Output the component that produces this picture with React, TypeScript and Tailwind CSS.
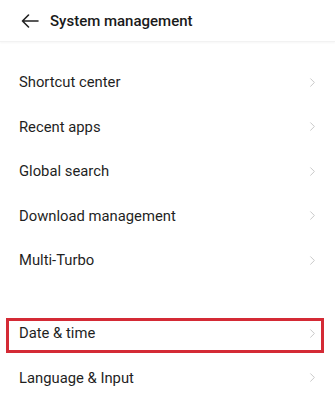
import { ChevronRight } from "lucide-react";

const groupA = [
  "Shortcut center",
  "Recent apps",
  "Global search",
  "Download management",
  "Multi-Turbo",
];

const groupB = ["Date & time", "Language & Input"];

function Row({ label, marked }: { label: string; marked?: boolean }) {
  return (
    <div className="relative flex h-[44.5px] items-center justify-between pl-[19px] pr-[15px]">
      <span className="text-[14.8px] text-[#1f1f1f]">{label}</span>
      <ChevronRight className="h-[15px] w-[15px] text-[#c4c4c4]" strokeWidth={1.5} />
      {marked && (
        <div className="pointer-events-none absolute left-[6px] right-[11px] top-[7px] bottom-[3px] border-[3px] border-[#d42a35]" />
      )}
    </div>
  );
}

export default function App() {
  return (
    <div
      className="h-[416px] w-[335px] overflow-hidden bg-white"
      style={{ fontFamily: "Roboto, 'Liberation Sans', sans-serif" }}
    >
      <div className="flex h-[42px] items-center gap-[11px] pl-[21px] pt-[1px] shadow-[0_1px_2px_rgba(0,0,0,0.04)] border-b border-[#f2f2f2]">
        <svg width="18" height="14" viewBox="0 0 18 14" fill="none" stroke="#222" strokeWidth="1.6" strokeLinecap="round" strokeLinejoin="round">
          <path d="M17 7H1.5M7.5 1L1.5 7l6 6" />
        </svg>
        <span className="text-[15px] font-medium text-[#1a1a1a]">System management</span>
      </div>

      <div className="pt-[18px]">
        {groupA.map((l) => (
          <Row key={l} label={l} />
        ))}
      </div>

      <div className="pt-[28.5px]">
        {groupB.map((l, i) => (
          <Row key={l} label={l} marked={i === 0} />
        ))}
      </div>
    </div>
  );
}
